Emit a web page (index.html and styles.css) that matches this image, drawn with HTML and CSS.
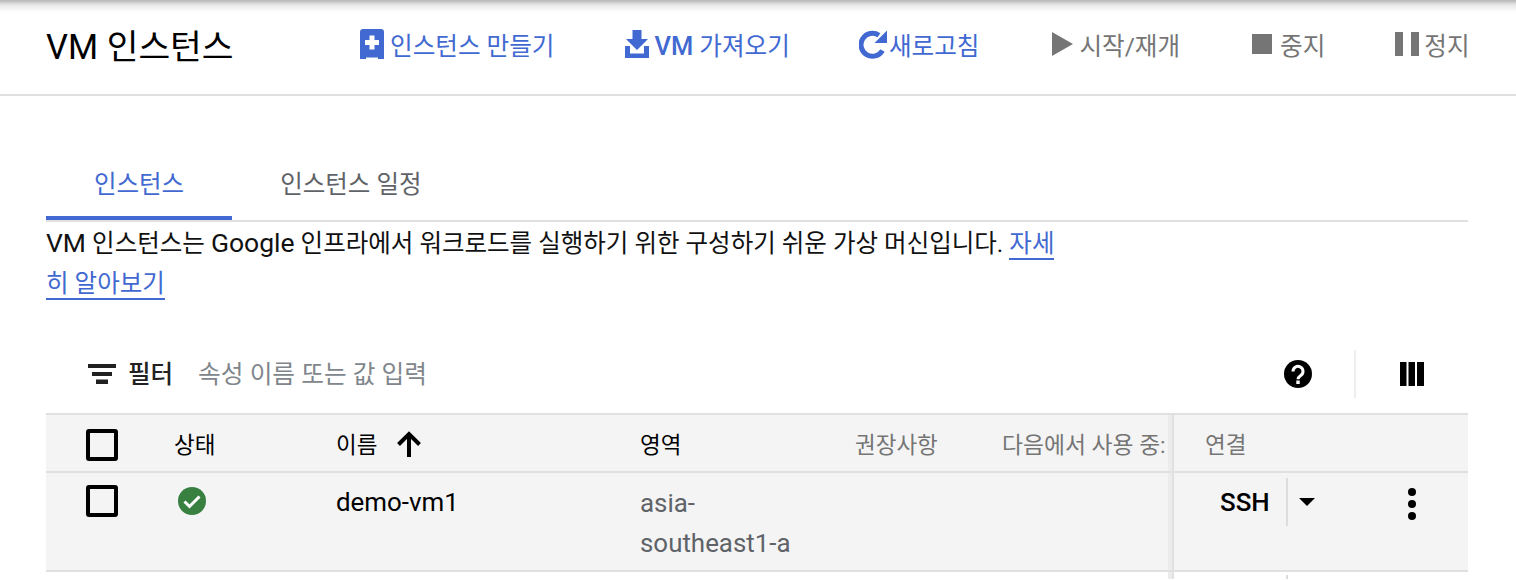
FILE: index.html
```html
<!DOCTYPE html>
<html lang="ko">
<head>
    <meta charset="UTF-8">
    <title>VM 인스턴스</title>
    <link rel="stylesheet" href="styles.css">
</head>
<body>
    <header class="toolbar">
        <h1 class="page-title">VM 인스턴스</h1>
        <div class="actions">
            <a class="action action-create">
                <svg class="icon" width="24" height="30" viewBox="0 0 24 30"><path fill="#4169d1" d="M3 0h18a3 3 0 0 1 3 3v27h-6v-1.500H6V30H0V3a3 3 0 0 1 3-3z"/><path fill="#fff" d="M9.500 6.500h5V11H19v5h-4.500v4.500h-5V16H5v-5h4.500z"/></svg>
                인스턴스 만들기
            </a>
            <a class="action action-import">
                <svg class="icon" width="24" height="28" viewBox="0 0 24 28"><path fill="#4169d1" d="M7.500 0h9v9H23L12 20 1 9h6.500zM0 16h5v7.500h14V16h5v12H0z"/></svg>
                <span><span class="en">VM</span> 가져오기</span>
            </a>
            <a class="action action-refresh">
                <svg class="icon" width="28" height="30" viewBox="0 0 28 30"><path fill="none" stroke="#4169d1" stroke-width="5" d="M23.500 21.500A11.500 11.500 0 1 1 20 6.300"/><path fill="#4169d1" d="M28 1.500V14H15.500z"/></svg>
                새로고침
            </a>
            <a class="action action-off action-start">
                <svg class="icon" width="21" height="24" viewBox="0 0 21 24"><path fill="#757575" d="M0 0l21 12L0 24z"/></svg>
                시작/재개
            </a>
            <a class="action action-off action-stop">
                <svg class="icon" width="20" height="20" viewBox="0 0 20 20"><path fill="#757575" d="M0 0h20v20H0z"/></svg>
                중지
            </a>
            <a class="action action-off action-pause">
                <svg class="icon" width="25" height="24" viewBox="0 0 25 24"><path fill="#757575" d="M0 0h8v24H0zM16 0h8v24h-8z"/></svg>
                정지
            </a>
        </div>
    </header>

    <main class="content">
        <nav class="tabs">
            <a class="tab tab-active">인스턴스</a>
            <a class="tab">인스턴스 일정</a>
        </nav>

        <p class="intro"><span class="en">VM</span> 인스턴스는 <span class="en">Google</span> 인프라에서 워크로드를 실행하기 위한 구성하기 쉬운 가상 머신입니다. <a class="intro-link">자세히 알아보기</a></p>

        <div class="filter-bar">
            <svg class="filter-icon" width="28" height="20" viewBox="0 0 28 20"><path fill="#212121" d="M0 0h28v4H0zM4 8h20v4H4zM8 15.500h12V20H8z"/></svg>
            <span class="filter-label">필터</span>
            <span class="filter-hint">속성 이름 또는 값 입력</span>
            <svg class="help-icon" width="28" height="28" viewBox="0 0 28 28"><circle cx="14" cy="14" r="14"/><path fill="none" stroke="#fff" stroke-width="3" d="M9 11.500a5 5 0 1 1 8 3.800c-2 1.500-3 2-3 4"/><path fill="#fff" d="M12.300 20.500h3.400v3.400h-3.400z"/></svg>
            <span class="bar-divider"></span>
            <svg class="columns-icon" width="24" height="24" viewBox="0 0 24 24"><path d="M0 0h6.500v24H0zM8.500 0h6.500v24H8.500zM17 0h7v24h-7z"/></svg>
        </div>

        <div class="table">
            <div class="row row-head">
                <div class="cell cell-check"><span class="checkbox"></span></div>
                <div class="cell cell-status">상태</div>
                <div class="cell cell-name">이름
                    <svg class="sort-icon" width="24" height="27" viewBox="0 0 24 27"><path fill="none" stroke="#000" stroke-width="4" d="M12 27V4M1.500 14.500L12 4l10.500 10.500"/></svg>
                </div>
                <div class="cell cell-zone">영역</div>
                <div class="cell cell-rec">권장사항</div>
                <div class="cell cell-use">다음에서 사용 중:</div>
                <div class="cell cell-connect cell-connect-head">연결</div>
            </div>
            <div class="row row-body">
                <div class="cell cell-check"><span class="checkbox"></span></div>
                <div class="cell cell-status">
                    <svg width="28" height="28" viewBox="0 0 28 28"><circle cx="14" cy="14" r="14" fill="#388040"/><path fill="none" stroke="#fff" stroke-width="3" d="M6.500 14.500l5 5 10-10"/></svg>
                </div>
                <div class="cell cell-name">demo-vm1</div>
                <div class="cell cell-zone cell-zone-value">asia-<br>southeast1-a</div>
                <div class="cell cell-rec"></div>
                <div class="cell cell-use"></div>
                <div class="cell cell-connect">
                    <span class="ssh">SSH</span>
                    <span class="ssh-menu"><svg width="16" height="8" viewBox="0 0 16 8"><path d="M0 0h16L8 8z"/></svg></span>
                    <svg class="more-icon" width="12" height="32" viewBox="0 0 12 32"><circle cx="6" cy="4" r="4"/><circle cx="6" cy="16" r="4"/><circle cx="6" cy="28" r="4"/></svg>
                </div>
            </div>
            <div class="row row-next">
                <div class="cell cell-connect">
                    <span class="ssh"></span>
                    <span class="ssh-menu"></span>
                </div>
            </div>
        </div>
    </main>
</body>
</html>
```

FILE: styles.css
```css
* {
    margin: 0;
    padding: 0;
    box-sizing: border-box;
}

body {
    font-family: Roboto, "Noto Sans CJK KR", sans-serif;
    background: #fff;
    color: #000;
    height: 580px;
    overflow: hidden;
}

/* Top toolbar */
.toolbar {
    display: flex;
    align-items: center;
    height: 96px;
    padding: 0 46px 6px;
    border-bottom: 2px solid #e0e0e0;
    background: linear-gradient(#b5b5b5 0, #e8e8e8 5px, #fff 12px);
}

.page-title {
    font-size: 34.5px;
    font-weight: 400;
    width: 314px;
    flex-shrink: 0;
}

.actions {
    display: flex;
    align-items: center;
}

.action {
    display: flex;
    align-items: center;
    gap: 6px;
    font-size: 24.6px;
    color: #4169d1;
    white-space: nowrap;
}

.action .en {
    font-size: 25.5px;
    font-weight: 500;
}

.action-off {
    color: #757575;
}

.action-create { margin-right: 70px; }
.action-import { margin-right: 69px; }
.action-refresh { margin-right: 73px; gap: 2px; }
.action-start { margin-right: 72px; gap: 6px; }
.action-stop { margin-right: 70px; gap: 8px; }
.action-pause { gap: 4px; }

/* Tabs */
.content {
    padding: 0 48px 0 46px;
}

.tabs {
    display: flex;
    margin-top: 52px;
    border-bottom: 2px solid #e0e0e0;
}

.tab {
    height: 72px;
    padding: 17px 48px 0;
    font-size: 24.5px;
    color: #5f6368;
}

.tab-active {
    color: #4169d1;
    border-bottom: 4px solid #4169d1;
    margin-bottom: -2px;
}

.intro {
    width: 1020px;
    font-size: 24.5px;
    line-height: 40px;
    color: #111;
    margin-top: 1px;
}

.intro .en {
    font-size: 26.5px;
}

.intro-link {
    color: #4169d1;
    border-bottom: 2px solid #4169d1;
}

/* Filter row */
.filter-bar {
    display: flex;
    align-items: center;
    height: 72px;
    margin-top: 34px;
    margin-bottom: 3px;
    padding-left: 42px;
}

.filter-icon { margin-right: 12px; }

.filter-label {
    font-size: 24.5px;
    font-weight: 500;
    color: #212121;
    margin-right: 25px;
    margin-bottom: 4px;
}

.filter-hint {
    font-size: 24.7px;
    color: #80868b;
    margin-bottom: 4px;
}

.help-icon { margin-left: auto; }

.bar-divider {
    width: 2px;
    height: 48px;
    background: #eee;
    margin: 0 44px 0 42px;
}

.columns-icon { margin-right: 44px; }

/* Table */
.table {
    background: #f4f4f4;
}

.row {
    display: flex;
    border-top: 2px solid #e0e0e0;
}

.row-head {
    height: 58px;
    align-items: center;
}

.row-head .checkbox {
    margin-top: 4px;
}

.row-body {
    height: 99px;
}

.row-next {
    height: 9px;
    background: #fff;
    justify-content: flex-end;
}

.cell {
    flex-shrink: 0;
    font-size: 22.5px;
}

.checkbox {
    display: block;
    width: 32px;
    height: 32px;
    border: 4px solid #000;
    border-radius: 3px;
}

.cell-check { width: 128px; padding-left: 40px; }
.cell-status { width: 162px; }
.cell-name { width: 304px; display: flex; align-items: center; gap: 20px; }
.cell-zone { width: 176px; }
.cell-rec { width: 186px; padding-left: 39px; color: #757575; }
.cell-use { width: 170px; color: #757575; white-space: nowrap; font-size: 22.8px; }

.row-body .cell { padding-top: 13px; }
.row-body .cell-check { padding-top: 12px; }
.row-body .cell-name { font-size: 25.9px; padding-top: 14px; align-items: flex-start; }
.row-body .cell-status { padding-top: 14px; padding-left: 4px; }

.row-body .cell-zone-value {
    font-size: 25.9px;
    line-height: 40px;
    padding-top: 10px;
    color: #5f6368;
    white-space: nowrap;
}

.cell-connect {
    flex: 1;
    display: flex;
    align-self: stretch;
    align-items: center;
    border-left: 2px solid #e0e0e0;
    box-shadow: -4px 0 0 #ececec;
}

.row-next .cell-connect {
    flex: 0 0 296px;
    align-items: flex-start;
}

.cell-connect-head {
    padding-left: 31px;
    color: #757575;
}

.row-body .cell-connect {
    align-items: flex-start;
}

.ssh {
    font-size: 25.9px;
    font-weight: 500;
    margin-left: 46px;
    margin-top: 1px;
    width: 66px;
}

.ssh-menu {
    display: flex;
    align-items: center;
    justify-content: center;
    width: 40px;
    height: 48px;
    margin-top: -8px;
    border-left: 2px solid #dcdcdc;
}

.row-next .ssh {
    margin-top: 0;
}

.row-next .ssh-menu {
    height: 4px;
    margin-top: 3px;
}

.more-icon { margin-left: 80px; margin-top: 2px; }
```
